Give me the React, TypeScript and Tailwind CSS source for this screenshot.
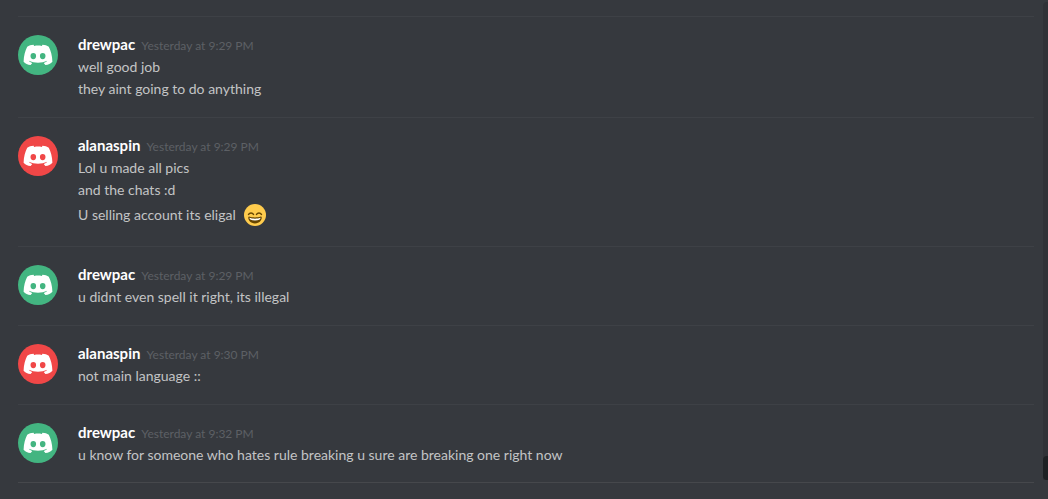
type Message = {
  author: string;
  time: string;
  color: "green" | "red";
  lines: { text: string; emoji?: boolean }[];
};

const messages: Message[] = [
  {
    author: "drewpac",
    time: "Yesterday at 9:29 PM",
    color: "green",
    lines: [{ text: "well good job" }, { text: "they aint going to do anything" }],
  },
  {
    author: "alanaspin",
    time: "Yesterday at 9:29 PM",
    color: "red",
    lines: [
      { text: "Lol u made all pics" },
      { text: "and the chats :d" },
      { text: "U selling account its eligal", emoji: true },
    ],
  },
  {
    author: "drewpac",
    time: "Yesterday at 9:29 PM",
    color: "green",
    lines: [{ text: "u didnt even spell it right, its illegal" }],
  },
  {
    author: "alanaspin",
    time: "Yesterday at 9:30 PM",
    color: "red",
    lines: [{ text: "not main language ::" }],
  },
  {
    author: "drewpac",
    time: "Yesterday at 9:32 PM",
    color: "green",
    lines: [
      {
        text: "u know for someone who hates rule breaking u sure are breaking one right now",
      },
    ],
  },
];

function Avatar({ color }: { color: Message["color"] }) {
  return (
    <div
      className={`flex h-10 w-10 shrink-0 items-center justify-center rounded-full ${
        color === "green" ? "bg-[#43b581]" : "bg-[#f04747]"
      }`}
    >
      <svg viewBox="0 0 30 22" className="h-[22px] w-[30px]" aria-hidden="true">
        <path
          fill="#fff"
          fillRule="evenodd"
          d="M10.6 .7C8.2 .7 5.8 1.5 4.2 2.8C2.2 6.7 .7 12.2 .6 17.8C2.2 19.8 4.6 21 7.6 21.1L9.3 18.9C7.7 18.4 6.5 17.7 5.8 16.7C11.3 19.3 18.7 19.3 24.2 16.7C23.5 17.7 22.3 18.4 20.7 18.9L22.4 21.1C25.4 21 27.8 19.8 29.4 17.8C29.3 12.2 27.8 6.7 25.8 2.8C24.2 1.5 21.8 .7 19.4 .7L18.9 1.9C16.3 1.5 13.7 1.5 11.1 1.9ZM10.3 9A2.8 3.1 0 1 1 10.3 15.2A2.8 3.1 0 1 1 10.3 9ZM19.7 9A2.8 3.1 0 1 1 19.7 15.2A2.8 3.1 0 1 1 19.7 9Z"
        />
      </svg>
    </div>
  );
}

function SmileEmoji() {
  return (
    <svg viewBox="0 0 36 36" className="h-[22px] w-[22px]" role="img" aria-label="smile">
      <circle cx="18" cy="18" r="18" fill="#ffcc4d" />
      <path
        fill="#664500"
        d="M28.5 20.9C28 20.4 27.4 20.6 26.6 20.9C24.8 21.5 21.6 22 18 22S11.2 21.500 9.400 20.900C8.600 20.600 8 20.400 7.500 20.900C5.500 23 9 32 18 32S30.500 23 28.500 20.900Z"
      />
      <path
        fill="#fff"
        d="M9 22.600C11 23.500 14.500 24 18 24S25 23.500 27 22.600C27.200 24.600 24.500 27 18 27S8.800 24.600 9 22.600Z"
      />
      <path
        fill="none"
        stroke="#664500"
        strokeWidth="2.5"
        strokeLinecap="round"
        d="M7.500 17C9.500 14 13.500 14 15.500 17M20.500 17C22.500 14 26.500 14 28.500 17"
      />
    </svg>
  );
}

function MessageGroup({ message }: { message: Message }) {
  return (
    <li className="flex gap-5 border-t border-[#3e4146] pt-[18px] pb-[17px] last:pb-4">
      <Avatar color={message.color} />
      <div className="min-w-0 flex-1">
        <div className="flex h-[21px] items-baseline gap-1.5">
          <h2 className="text-[15px] leading-[18px] font-bold text-white">{message.author}</h2>
          <time className="text-xs leading-[18px] text-[#5d6065]">{message.time}</time>
        </div>
        {message.lines.map((line) => (
          <p
            key={line.text}
            className={`flex items-center gap-2 ${line.emoji ? "h-7" : "min-h-[22px]"}`}
          >
            {line.text}
            {line.emoji && <SmileEmoji />}
          </p>
        ))}
      </div>
    </li>
  );
}

export default function App() {
  return (
    <div className="flex min-h-screen bg-[#36393e] font-['Lato',sans-serif] text-[14px] leading-[22px] text-[#c3c4c5]">
      <main className="min-w-0 flex-1 py-4 pr-[9px] pl-[18px]">
        <ol className="border-b border-[#46484c]">
          {messages.map((message, i) => (
            <MessageGroup key={i} message={message} />
          ))}
        </ol>
      </main>

      {/* Scrollbar */}
      <div className="flex w-[5px] flex-col pt-0.5 pb-[19px]" aria-hidden="true">
        <div className="flex flex-1 flex-col justify-end rounded-tl bg-[#303237]">
          <div className="h-6 rounded-l bg-[#1e2124]" />
        </div>
      </div>
    </div>
  );
}
